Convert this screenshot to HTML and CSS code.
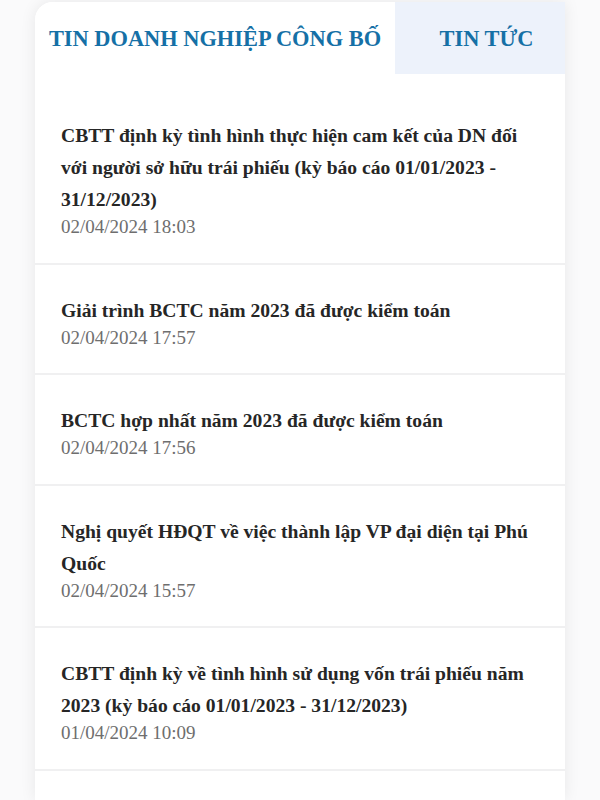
FILE: index.html
```html
<!DOCTYPE html>
<html lang="vi">
<head>
<meta charset="utf-8">
<title>Tin doanh nghiệp công bố</title>
<link rel="stylesheet" href="styles.css">
</head>
<body>
<div class="card">
  <div class="tabs">
    <div class="tab tab-active">TIN DOANH NGHIỆP CÔNG BỐ</div>
    <div class="tab tab-idle">TIN TỨC</div>
  </div>
  <ul class="news">
    <li class="item">
      <div class="title">CBTT định kỳ tình hình thực hiện cam kết của DN đối với người sở hữu trái phiếu (kỳ báo cáo 01/01/2023 - 31/12/2023)</div>
      <div class="date">02/04/2024 18:03</div>
    </li>
    <li class="item">
      <div class="title">Giải trình BCTC năm 2023 đã được kiểm toán</div>
      <div class="date">02/04/2024 17:57</div>
    </li>
    <li class="item">
      <div class="title">BCTC hợp nhất năm 2023 đã được kiểm toán</div>
      <div class="date">02/04/2024 17:56</div>
    </li>
    <li class="item">
      <div class="title">Nghị quyết HĐQT về việc thành lập VP đại diện tại Phú Quốc</div>
      <div class="date">02/04/2024 15:57</div>
    </li>
    <li class="item">
      <div class="title">CBTT định kỳ về tình hình sử dụng vốn trái phiếu năm 2023 (kỳ báo cáo 01/01/2023 - 31/12/2023)</div>
      <div class="date">01/04/2024 10:09</div>
    </li>
  </ul>
</div>
</body>
</html>
```
FILE: styles.css
```css
html, body {
  margin: 0;
  padding: 0;
  background: #fafafb;
  height: 800px;
  overflow: hidden;
}
body {
  font-family: "Liberation Serif", "Times New Roman", serif;
}
.card {
  margin: 2px 35px 0;
  background: #ffffff;
  border-radius: 18px 0 0 0;
  box-shadow: 0 0 16px rgba(0, 0, 0, 0.08);
  min-height: 798px;
}
.tabs {
  display: flex;
  height: 72px;
}
.tab {
  display: flex;
  align-items: center;
  justify-content: center;
  font-weight: bold;
  font-size: 22.4px;
  color: #1570a6;
  padding-top: 1px;
}
.tab-active {
  width: 360px;
  background: #ffffff;
  border-radius: 18px 18px 0 0;
}
.tab-idle {
  flex: 1;
  background: #edf2fb;
  padding-left: 13px;
}
.news {
  list-style: none;
  margin: 0;
  padding: 16px 0 0;
}
.item {
  padding: 30px 26px 25.5px;
  border-bottom: 2px solid #f0f0f1;
}
.title {
  font-weight: bold;
  font-size: 19.6px;
  line-height: 32px;
  color: #262626;
}
.date {
  font-size: 19px;
  line-height: 21px;
  color: #6e6e6e;
}
```
